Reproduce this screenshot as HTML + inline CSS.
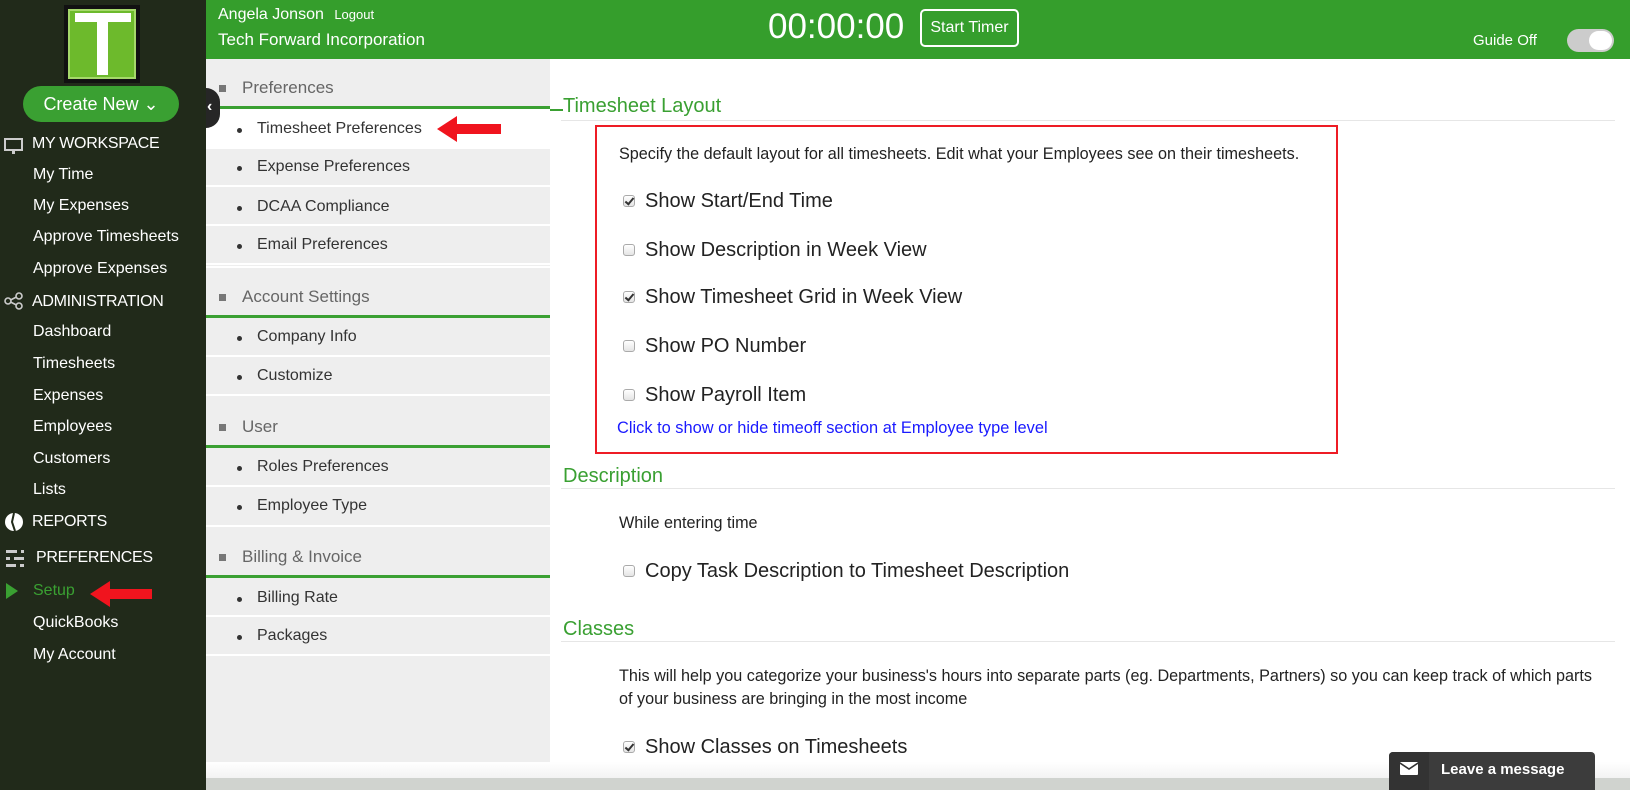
<!DOCTYPE html>
<html><head><meta charset="utf-8"><style>
*{margin:0;padding:0;box-sizing:border-box}
body{width:1630px;height:790px;overflow:hidden;background:#fff;font-family:"Liberation Sans",sans-serif;position:relative}
.a{position:absolute;white-space:nowrap}
.sb{position:absolute;left:0;top:0;width:206px;height:790px;background:#212a1a}
.si{position:absolute;left:33px;color:#fff;font-size:16px;line-height:20px}
.sh{position:absolute;left:32px;color:#fff;font-size:16px;line-height:20px;letter-spacing:-0.3px}
.hd{position:absolute;left:206px;top:0;width:1424px;height:59px;background:#359e2c}
.pp{position:absolute;left:206px;top:59px;width:344px;height:703px;background:#eeeeee}
.pr{position:absolute;left:206px;width:344px;border-bottom:2px solid #fff}
.ph{position:absolute;left:206px;width:344px;border-bottom:3px solid #3aa032}
.pt{position:absolute;color:#333;font-size:16px;line-height:20px}
.hh{position:absolute;color:#666;font-size:17px;line-height:20px}
.bul{position:absolute;left:237px;width:5px;height:5px;border-radius:50%;background:#333}
.sq{position:absolute;left:219px;width:7px;height:7px;background:#777}
.gt{position:absolute;left:563px;color:#3aa032;font-size:20px;line-height:24px}
.gl{position:absolute;left:561px;width:1054px;height:1px;background:#e6e6e6}
.cb{position:absolute;left:623px;width:12px;height:12px;border:1px solid #aaa;border-radius:3px;background:linear-gradient(#fff,#e4e4e4)}
.ck::after{content:"";position:absolute;left:3px;top:0px;width:3px;height:7px;border:solid #333;border-width:0 2px 2px 0;transform:rotate(40deg)}
.cl{position:absolute;left:645px;color:#222;font-size:20px;line-height:24px}
.tx{position:absolute;left:619px;color:#222;font-size:16.2px;line-height:22px}
</style></head><body>
<div class="sb"></div>
<div class="a" style="left:64px;top:5px;width:76px;height:78px;background:#111"></div>
<div class="a" style="left:68px;top:9px;width:68px;height:70px;background:#6dba2c;border:2px solid #a5d86a"></div>
<div class="a" style="left:75px;top:13px;width:56px;height:9px;background:#fff"></div>
<div class="a" style="left:97px;top:13px;width:11px;height:62px;background:#fff"></div>
<div class="a" style="left:23px;top:86px;width:156px;height:36px;border-radius:18px;background:#3aa032;color:#fff;font-size:18px;line-height:36px;text-align:center">Create New ⌄</div>
<svg class="a" style="left:4px;top:137px" width="20" height="18"><rect x="1" y="2" width="17" height="11" fill="none" stroke="#ccc" stroke-width="2"/><rect x="8" y="13" width="3" height="4" fill="#ccc"/></svg>
<div class="sh" style="top:134px">MY WORKSPACE</div>
<div class="si" style="top:165px">My Time</div>
<div class="si" style="top:196px">My Expenses</div>
<div class="si" style="top:227px">Approve Timesheets</div>
<div class="si" style="top:259px">Approve Expenses</div>
<svg class="a" style="left:4px;top:292px" width="20" height="18"><circle cx="4" cy="9" r="3" fill="none" stroke="#ccc" stroke-width="1.6"/><circle cx="15" cy="4" r="3" fill="none" stroke="#ccc" stroke-width="1.6"/><circle cx="15" cy="14" r="3" fill="none" stroke="#ccc" stroke-width="1.6"/><path d="M6.5 8L12.5 5M6.5 10L12.5 13" stroke="#ccc" stroke-width="1.6"/></svg>
<div class="sh" style="top:292px">ADMINISTRATION</div>
<div class="si" style="top:322px">Dashboard</div>
<div class="si" style="top:354px">Timesheets</div>
<div class="si" style="top:386px">Expenses</div>
<div class="si" style="top:417px">Employees</div>
<div class="si" style="top:449px">Customers</div>
<div class="si" style="top:480px">Lists</div>
<svg class="a" style="left:4px;top:512px" width="20" height="20"><circle cx="10" cy="10" r="9" fill="#fff"/><path d="M10 1L8 10L11 19" stroke="#212a1a" stroke-width="2" fill="none"/></svg>
<div class="sh" style="top:512px">REPORTS</div>
<svg class="a" style="left:4px;top:548px" width="22" height="22"><g fill="#ccc"><rect x="2" y="2" width="18" height="3"/><rect x="2" y="9" width="18" height="3"/><rect x="2" y="16" width="18" height="3"/></g><g fill="#212a1a"><rect x="13" y="1" width="4" height="5"/><rect x="6" y="8" width="4" height="5"/><rect x="12" y="15" width="4" height="5"/></g></svg>
<div class="sh" style="top:548px;left:36px">PREFERENCES</div>
<svg class="a" style="left:6px;top:583px" width="12" height="16"><path d="M0 0L12 8L0 16Z" fill="#3aa032"/></svg>
<div class="si" style="top:581px;color:#3aa032">Setup</div>
<svg class="a" style="left:90px;top:581px" width="62" height="26"><path d="M0 13L20 0V8H62V18H20V26Z" fill="#f0141e"/></svg>
<div class="si" style="top:613px">QuickBooks</div>
<div class="si" style="top:645px">My Account</div>

<div class="hd"></div>
<div class="a" style="left:218px;top:5px;color:#fff;font-size:16px;line-height:20px">Angela Jonson <span style="font-size:13px;margin-left:6px">Logout</span></div>
<div class="a" style="left:218px;top:29px;color:#fff;font-size:17px;line-height:22px">Tech Forward Incorporation</div>
<div class="a" style="left:768px;top:6px;color:#fff;font-size:35px;line-height:42px">00:00:00</div>
<div class="a" style="left:920px;top:9px;width:99px;height:38px;border:2px solid #fff;border-radius:5px;color:#fff;font-size:16px;line-height:34px;text-align:center">Start Timer</div>
<div class="a" style="left:1473px;top:31px;color:#fff;font-size:15px;line-height:20px">Guide Off</div>
<div class="a" style="left:1567px;top:29px;width:47px;height:23px;border-radius:12px;background:#ccc"></div>
<div class="a" style="left:1589px;top:31px;width:23px;height:19px;border-radius:10px;background:#fff"></div>

<div class="pp"></div>
<div class="a" style="left:206px;top:109px;width:344px;height:40px;background:#fff"></div>
<div class="ph" style="top:59px;height:50px"></div>
<div class="sq" style="top:85px"></div><div class="hh" style="left:242px;top:78px">Preferences</div>
<div class="bul" style="top:128px"></div><div class="pt" style="left:257px;top:119px">Timesheet Preferences</div>
<svg class="a" style="left:437px;top:116px" width="64" height="26"><path d="M0 13L20 0V8H64V18H20V26Z" fill="#f0141e"/></svg>
<div class="pr" style="top:149px;height:38px"></div>
<div class="bul" style="top:166px"></div><div class="pt" style="left:257px;top:157px">Expense Preferences</div>
<div class="pr" style="top:187px;height:39px"></div>
<div class="bul" style="top:206px"></div><div class="pt" style="left:257px;top:197px">DCAA Compliance</div>
<div class="pr" style="top:226px;height:39px"></div>
<div class="bul" style="top:244px"></div><div class="pt" style="left:257px;top:235px">Email Preferences</div>
<div class="pr" style="top:226px;height:40px;border:none"></div>
<div class="ph" style="top:266px;height:52px;border-top:2px solid #fff"></div>
<div class="sq" style="top:294px"></div><div class="hh" style="left:242px;top:287px">Account Settings</div>
<div class="bul" style="top:336px"></div><div class="pt" style="left:257px;top:327px">Company Info</div>
<div class="pr" style="top:318px;height:39px"></div>
<div class="bul" style="top:375px"></div><div class="pt" style="left:257px;top:366px">Customize</div>
<div class="pr" style="top:357px;height:39px"></div>
<div class="ph" style="top:396px;height:52px"></div>
<div class="sq" style="top:424px"></div><div class="hh" style="left:242px;top:417px">User</div>
<div class="bul" style="top:466px"></div><div class="pt" style="left:257px;top:457px">Roles Preferences</div>
<div class="pr" style="top:448px;height:39px"></div>
<div class="bul" style="top:505px"></div><div class="pt" style="left:257px;top:496px">Employee Type</div>
<div class="pr" style="top:487px;height:40px"></div>
<div class="ph" style="top:527px;height:51px"></div>
<div class="sq" style="top:554px"></div><div class="hh" style="left:242px;top:547px">Billing &amp; Invoice</div>
<div class="bul" style="top:597px"></div><div class="pt" style="left:257px;top:588px">Billing Rate</div>
<div class="pr" style="top:578px;height:39px"></div>
<div class="bul" style="top:635px"></div><div class="pt" style="left:257px;top:626px">Packages</div>
<div class="pr" style="top:617px;height:39px"></div>
<div class="a" style="left:206px;top:88px;width:14px;height:40px;border-radius:0 20px 20px 0;background:#262626"></div>
<div class="a" style="left:207px;top:97px;color:#fff;font-size:16px;font-weight:bold;line-height:20px">‹</div>

<div class="a" style="left:550px;top:109px;width:13px;height:2px;background:#3aa032"></div>
<div class="gt" style="top:94px">Timesheet Layout</div>
<div class="gl" style="top:120px"></div>
<div class="a" style="left:595px;top:125px;width:743px;height:329px;border:2px solid #ee1c25"></div>
<div class="tx" style="top:143px">Specify the default layout for all timesheets. Edit what your Employees see on their timesheets.</div>
<div class="cb ck" style="top:195px"></div><div class="cl" style="top:189px">Show Start/End Time</div>
<div class="cb" style="top:244px"></div><div class="cl" style="top:238px">Show Description in Week View</div>
<div class="cb ck" style="top:291px"></div><div class="cl" style="top:285px">Show Timesheet Grid in Week View</div>
<div class="cb" style="top:340px"></div><div class="cl" style="top:334px">Show PO Number</div>
<div class="cb" style="top:389px"></div><div class="cl" style="top:383px">Show Payroll Item</div>
<div class="tx" style="left:617px;top:417px;color:#1a1aff;font-size:16.4px">Click to show or hide timeoff section at Employee type level</div>
<div class="gt" style="top:464px">Description</div>
<div class="gl" style="top:488px"></div>
<div class="tx" style="top:512px">While entering time</div>
<div class="cb" style="top:565px"></div><div class="cl" style="top:559px">Copy Task Description to Timesheet Description</div>
<div class="gt" style="top:617px">Classes</div>
<div class="gl" style="top:641px"></div>
<div class="tx" style="top:665px">This will help you categorize your business's hours into separate parts (eg. Departments, Partners) so you can keep track of which parts</div>
<div class="tx" style="top:688px">of your business are bringing in the most income</div>
<div class="cb ck" style="top:741px"></div><div class="cl" style="top:735px">Show Classes on Timesheets</div>
<div class="a" style="left:206px;top:762px;width:1424px;height:16px;background:linear-gradient(#fff,#f3f3f3)"></div>
<div class="a" style="left:206px;top:778px;width:1424px;height:12px;background:#d0d3cf"></div>
<div class="a" style="left:1389px;top:752px;width:206px;height:38px;background:#3c3c3c;border-radius:4px 4px 0 0"></div>
<div class="a" style="left:1389px;top:752px;width:40px;height:38px;background:#333;border-radius:4px 0 0 0"></div>
<svg class="a" style="left:1400px;top:762px" width="18" height="13"><rect width="18" height="13" rx="1" fill="#fff"/><path d="M0 1L9 7L18 1" stroke="#333" stroke-width="1.6" fill="none"/></svg>
<div class="a" style="left:1441px;top:760px;color:#fff;font-size:15px;font-weight:bold;line-height:20px">Leave a message</div>
</body></html>
